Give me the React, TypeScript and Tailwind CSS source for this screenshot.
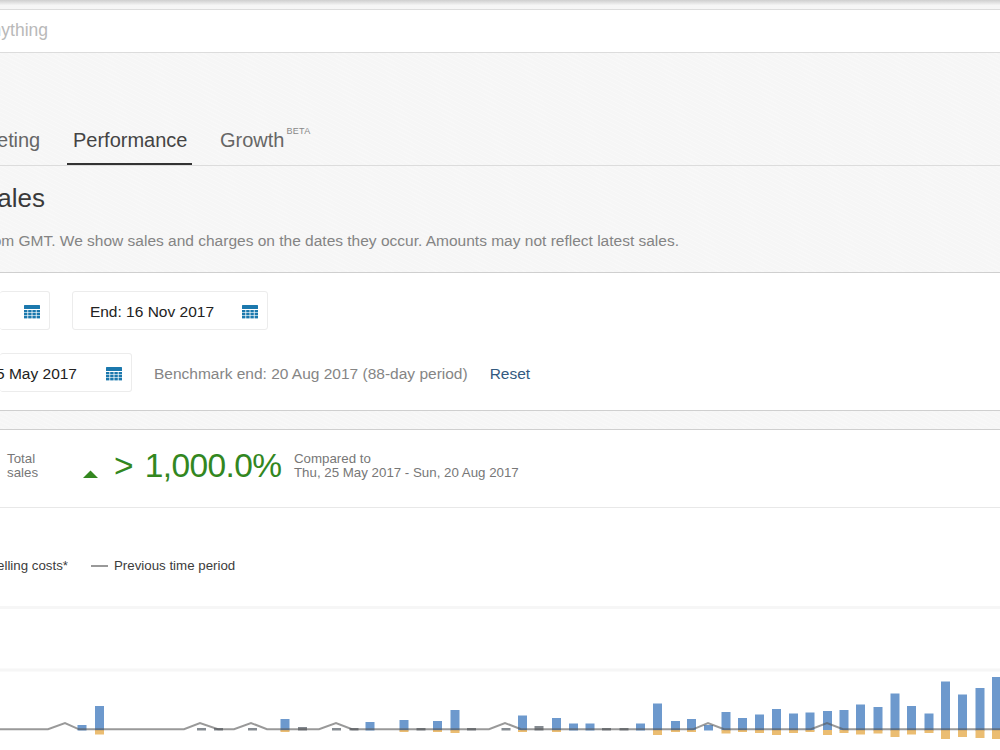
import clsx from 'clsx'

const BASELINE = 729

// one entry per day: left edge, top of the sales bar, bottom of the costs bar
const days = [
  { x: 77.5, top: 725, bottom: 731 },
  { x: 95, top: 706, bottom: 734.5 },
  { x: 197, top: 728, bottom: 731 },
  { x: 214, top: 728, bottom: 731 },
  { x: 248, top: 728, bottom: 731 },
  { x: 280.5, top: 719, bottom: 732 },
  { x: 298, top: 727, bottom: 731 },
  { x: 332, top: 728, bottom: 731 },
  { x: 349.5, top: 728, bottom: 731 },
  { x: 365.5, top: 722, bottom: 731 },
  { x: 399.5, top: 720, bottom: 732 },
  { x: 416.5, top: 728, bottom: 731 },
  { x: 433, top: 721, bottom: 732 },
  { x: 450.5, top: 710, bottom: 733 },
  { x: 467, top: 728, bottom: 731 },
  { x: 501.5, top: 728, bottom: 731 },
  { x: 518, top: 715.5, bottom: 732 },
  { x: 534.5, top: 726, bottom: 731 },
  { x: 552, top: 718, bottom: 732 },
  { x: 569, top: 723.5, bottom: 731 },
  { x: 585.5, top: 723.5, bottom: 731 },
  { x: 602, top: 728, bottom: 731 },
  { x: 619.5, top: 728, bottom: 731 },
  { x: 636, top: 723.5, bottom: 731 },
  { x: 653, top: 703.5, bottom: 735 },
  { x: 671, top: 721, bottom: 732 },
  { x: 687, top: 719, bottom: 732 },
  { x: 704, top: 725, bottom: 731 },
  { x: 721.5, top: 712, bottom: 733.5 },
  { x: 738, top: 718, bottom: 732 },
  { x: 755, top: 714.5, bottom: 733 },
  { x: 772, top: 709, bottom: 735 },
  { x: 789, top: 713.5, bottom: 733 },
  { x: 805.5, top: 712.5, bottom: 732 },
  { x: 823, top: 711, bottom: 735 },
  { x: 839.5, top: 710, bottom: 733 },
  { x: 856, top: 704.5, bottom: 734.5 },
  { x: 873.5, top: 707, bottom: 733.5 },
  { x: 890.5, top: 693.5, bottom: 737 },
  { x: 907, top: 706, bottom: 734.5 },
  { x: 924.5, top: 713.5, bottom: 733 },
  { x: 941, top: 681.5, bottom: 739 },
  { x: 958, top: 694.5, bottom: 737 },
  { x: 975.5, top: 688, bottom: 738 },
  { x: 992, top: 677, bottom: 739 },
]

const previousPeriod =
  'M0 729.3H48L65 723L79 729.3H184L200 723L218 729.3H234L251 723L267 729.3H319L336 723L352 729.3H489L505 723L521 729.3H693L708 723L724 729.3H811L827 723L843 729.3H1000'

function CalendarIcon() {
  return (
    <svg className="shrink-0" width="16" height="14" viewBox="0 0 16 14" fill="#1b78ad">
      <rect width="16" height="4" rx="0.5" />
      {[5, 8, 11].map(y =>
        [0, 4.2, 8.4, 12.6].map(x => <rect key={`${x}-${y}`} x={x} y={y} width="3.4" height="2.4" />)
      )}
    </svg>
  )
}

function DateField({ label, className }: { label: string; className: string }) {
  return (
    <button
      className={clsx(
        'flex h-[39px] shrink-0 items-center justify-end rounded-[3px] border border-[#ececec] bg-white pt-[2px] text-[15.5px] whitespace-nowrap text-[#222]',
        className
      )}
    >
      <span>{label}</span>
      <CalendarIcon />
    </button>
  )
}

function Chart() {
  return (
    <svg className="block" width="1000" height="146" viewBox="0 604 1000 146">
      <path d="M0 607.5H1000M0 670H1000" stroke="#f6f6f6" strokeWidth="3" />
      {days.map(d => {
        const tiny = d.top >= 726
        return (
          <g key={d.x}>
            <rect x={d.x} y={d.top} width="9" height={BASELINE + 1.5 - d.top} fill={tiny ? '#858b91' : '#6d99cd'} />
            {d.bottom > 731 && (
              <rect x={d.x} y={BASELINE + 1} width="9" height={d.bottom - BASELINE - 1} fill="#ebbd72" />
            )}
          </g>
        )
      })}
      <path d={previousPeriod} fill="none" stroke="#555" strokeOpacity="0.6" strokeWidth="2" />
    </svg>
  )
}

export default function App() {
  return (
    <div className="flex h-[750px] w-[1000px] flex-col overflow-hidden bg-[#f6f6f6] bg-[repeating-linear-gradient(27deg,#f8f8f8_0_1px,transparent_1px_4px)] font-['Liberation_Sans',Arial,sans-serif]">
      <div className="h-[9px] shrink-0 bg-linear-to-b from-[#cfcfcf] to-[#f6f6f6] to-60%" />
      <div className="flex h-11 w-full shrink-0 items-center border-y border-[#dcdcdc] bg-white pb-px">
        <div className="flex w-12 justify-end overflow-hidden text-[17.5px] whitespace-nowrap text-[#b9b9b9]">
          Search for anything
        </div>
      </div>

      <nav className="mt-[62px] flex h-[51px] shrink-0 border-b border-[#dcdcdc] text-[20px] text-[#666]">
        <div className="flex w-10 justify-end overflow-hidden pt-[10px] tracking-[-0.1px]">Marketing</div>
        <div className="ml-[27px] h-[50px] w-[125px] border-b-2 border-[#333] pt-[10px] pl-[6px] text-[#444]">
          Performance
        </div>
        <div className="ml-[28px] flex pt-[10px]">
          Growth
          <sup className="top-0 ml-[2px] text-[9px] leading-3 tracking-[0.3px] text-[#888]">BETA</sup>
        </div>
      </nav>

      <header className="h-[106px] shrink-0">
        <h1 className="mt-[13px] flex w-[45px] justify-end overflow-hidden text-[26px] leading-[38px] text-[#3a3a3a]">
          Sales
        </h1>
        <p className="mt-[13px] flex w-[679px] justify-end overflow-hidden text-[15.5px] leading-[22px] whitespace-nowrap text-[#848484]">
          Data is from GMT. We show sales and charges on the dates they occur. Amounts may not reflect latest sales.
        </p>
      </header>

      <section className="h-[139px] shrink-0 border-y border-[#cfcfcf] bg-white pt-[18px]">
        <div className="flex gap-[22px]">
          <DateField label="" className="w-[50px] border-l-0 pr-[9px]" />
          <DateField label="End: 16 Nov 2017" className="w-[196px] gap-[28px] pr-[9px]" />
        </div>
        <div className="mt-[23px] flex items-center text-[15.5px] whitespace-nowrap">
          <DateField label="25 May 2017" className="w-[132px] gap-[29px] overflow-hidden border-l-0 pr-[9px]" />
          <span className="ml-[22px] pt-[2px] text-[#858585]">Benchmark end: 20 Aug 2017 (88-day period)</span>
          <a className="ml-[22px] pt-[2px] text-[#335a80]">Reset</a>
        </div>
      </section>

      <section className="mt-[18px] flex-1 border-t border-[#cfcfcf] bg-white">
        <div className="flex h-[78px] border-b border-[#e8e8e8] text-[13.3px] leading-[14px] whitespace-nowrap text-[#777]">
          <div className="ml-[7px] w-[76px] pt-[22px]">
            Total
            <br />
            sales
          </div>
          <svg className="mt-[40px]" width="15" height="8" viewBox="0 0 15 8" fill="#33871f">
            <path d="M0 8L7.5 0.5L15 8Z" />
          </svg>
          <div className="ml-[16px] w-[180px] pt-[16px] text-[33.5px] leading-10 tracking-[-0.6px] [word-spacing:3px] text-[#33871f]">
            &gt; 1,000.0%
          </div>
          <div className="pt-[22px]">
            Compared to
            <br />
            Thu, 25 May 2017 - Sun, 20 Aug 2017
          </div>
        </div>

        <div className="flex h-[96px] items-start pt-[48px] text-[13.3px] leading-5 whitespace-nowrap text-[#3c3c3c]">
          <div className="flex w-[68px] justify-end overflow-hidden">Selling costs*</div>
          <div className="mt-[9px] ml-[23px] h-[2px] w-[17px] bg-[#999]" />
          <div className="ml-[6px]">Previous time period</div>
        </div>
        <Chart />
      </section>
    </div>
  )
}
